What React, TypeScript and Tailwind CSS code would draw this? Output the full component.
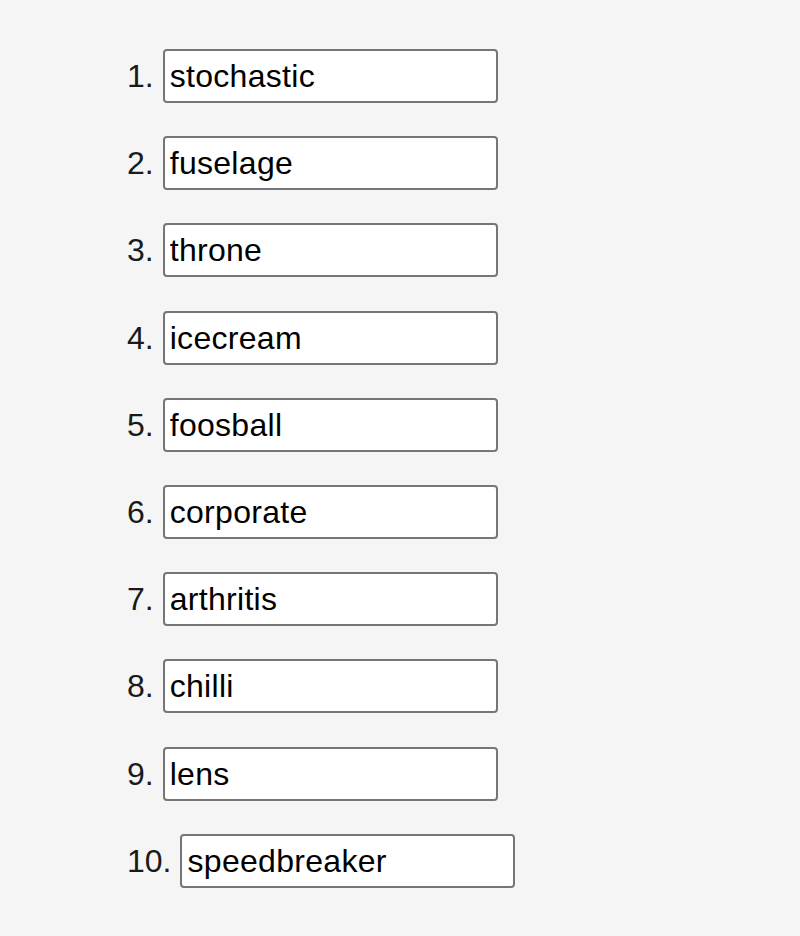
import React from 'react';

const words = [
  'stochastic',
  'fuselage',
  'throne',
  'icecream',
  'foosball',
  'corporate',
  'arthritis',
  'chilli',
  'lens',
  'speedbreaker',
];

export default function App() {
  return (
    <div
      className="min-h-[936px] w-full bg-[#f5f5f5] overflow-hidden"
      style={{ fontFamily: '"Liberation Sans", Arial, Helvetica, sans-serif' }}
    >
      <h2 className="mt-[-33px] pl-[160px] text-[32px] leading-[37px] font-bold text-[#8a8a8a]">
        Your words
      </h2>

      <ol className="mt-[45px] pl-[127px] flex flex-col gap-[33.2px]">
        {words.map((word, i) => (
          <li key={word} className="flex items-center h-[54px] text-[32px] text-[#1a1a1a]">
            <span className="mr-[9px]">{i + 1}.</span>
            <input
              type="text"
              defaultValue={word}
              className="h-[54px] w-[335px] rounded-[4px] border-2 border-[#767676] bg-white px-[5px] pt-[1px] text-[32px] tracking-[0.3px] text-black outline-none"
            />
          </li>
        ))}
      </ol>
    </div>
  );
}
